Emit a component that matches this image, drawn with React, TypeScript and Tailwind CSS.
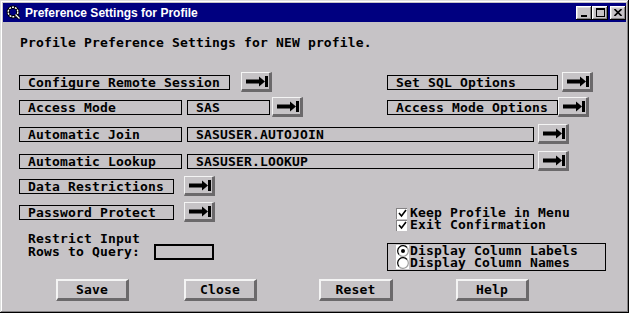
import React from 'react';

function ArrowBtn({ className = '' }: { className?: string }) {
  return (
    <button
      className={`flex h-[20px] w-[31px] shrink-0 items-center justify-start border-t border-l border-t-[#f4f4f4] border-l-[#f4f4f4] border-r-[3px] border-b-[3px] border-r-[#6b696b] border-b-[#6b696b] bg-[#c6c3c6] pl-[4px] ${className}`}
    >
      <svg width="22" height="11" viewBox="0 0 22 11">
        <rect x="0" y="3.5" width="14" height="4" fill="#000" />
        <polygon points="13,0.5 19,5.5 13,10.5" fill="#000" />
        <rect x="19" y="0" width="3" height="11" fill="#000" />
      </svg>
    </button>
  );
}

function Box({ className = '', children }: { className?: string; children?: React.ReactNode }) {
  return (
    <div className={`h-[15px] shrink-0 whitespace-pre border border-black pl-[8px] leading-[13px] ${className}`}>
      {children}
    </div>
  );
}

function PushBtn({ label, className = '' }: { label: string; className?: string }) {
  return (
    <button
      className={`flex h-[22px] shrink-0 items-center justify-center border-t-2 border-l-2 border-t-[#f4f4f4] border-l-[#f4f4f4] border-r-[3px] border-b-[3px] border-r-[#6b696b] border-b-[#6b696b] bg-[#c6c3c6] leading-[13px] ${className}`}
    >
      {label}
    </button>
  );
}

function Check({ label }: { label: string }) {
  return (
    <div className="flex h-[12px] items-center pl-[9px] leading-[12px]">
      <div className="flex h-[11px] w-[11px] items-center justify-center border-t border-l border-t-[#848284] border-l-[#848284] bg-white">
        <svg width="9" height="9" viewBox="0 0 9 9">
          <path d="M1 4 L3.5 7 L8 1" stroke="#000" strokeWidth="1.6" fill="none" />
        </svg>
      </div>
      <span className="ml-[3px] whitespace-pre">{label}</span>
    </div>
  );
}

function Radio({ label, on }: { label: string; on?: boolean }) {
  return (
    <div className="flex h-[12px] items-center leading-[12px]">
      <div className="flex h-[12px] w-[13px] items-center justify-center bg-white">
        <svg width="12" height="12" viewBox="0 0 12 12">
          <path d="M10 2.5 A5 5 0 0 0 2 9.5" stroke="#000" strokeWidth="1.2" fill="none" />
          <path d="M2 9.5 A5 5 0 0 0 10 2.5" stroke="#a0a0a0" strokeWidth="1.2" fill="none" />
          {on && <circle cx="6" cy="6" r="2" fill="#000" />}
        </svg>
      </div>
      <span className="ml-[1px] whitespace-pre">{label}</span>
    </div>
  );
}

export default function App() {
  const bevel =
    'shadow-[inset_-1px_-1px_#000,inset_1px_1px_#dedfde,inset_-2px_-2px_#848284,inset_2px_2px_#fff]';
  const tbtn =
    'flex h-[14px] w-[16px] items-center justify-center bg-[#c6c3c6] shadow-[inset_-1px_-1px_#000,inset_1px_1px_#fff,inset_-2px_-2px_#848284,inset_2px_2px_#dedfde]';

  return (
    <div className="flex h-[313px] w-[632px] bg-white">
      <div className={`flex h-[313px] w-[629px] flex-col bg-[#c6c3c6] p-[3px] ${bevel}`}>
        <div className="flex h-[19px] shrink-0 items-center bg-[#000080] pl-[3px]">
          <svg width="15" height="15" viewBox="0 0 15 15">
            <circle cx="7" cy="7" r="4.8" stroke="#000" strokeWidth="3.2" fill="none" />
            <circle cx="7" cy="7" r="4.8" stroke="#fff" strokeWidth="1.4" fill="none" strokeDasharray="2 1" />
            <path d="M9.5 9.5 L13.5 13.5" stroke="#000" strokeWidth="3" />
            <path d="M9.5 9.5 L13.5 13.5" stroke="#fff" strokeWidth="1.2" />
          </svg>
          <span className="ml-[4px] font-['Liberation_Sans',Arial,sans-serif] text-[12px] font-bold text-white">
            Preference Settings for Profile
          </span>
          <div className="ml-auto flex items-center">
            <div className={tbtn}>
              <div className="mt-[6px] h-[2px] w-[6px] bg-black" />
            </div>
            <div className={tbtn}>
              <div className="h-[9px] w-[9px] border border-t-2 border-black" />
            </div>
            <div className={`${tbtn} ml-[2px]`}>
              <svg width="8" height="7" viewBox="0 0 8 7">
                <path d="M0.5 0 L7.5 7 M7.5 0 L0.5 7" stroke="#000" strokeWidth="1.6" />
              </svg>
            </div>
          </div>
        </div>

        <div className="flex flex-col pl-[16px] font-['DejaVu_Sans_Mono',monospace] text-[13px] font-bold tracking-[0.17px] text-black">
          <div className="mt-[13px] h-[15px] whitespace-pre pl-[1px] leading-[15px]">
            Profile Preference Settings for NEW profile.
          </div>

          <div className="mt-[22px] flex h-[20px] items-center">
            <Box className="w-[211px]">Configure Remote Session</Box>
            <ArrowBtn className="ml-[11px]" />
            <Box className="ml-[115px] w-[171px]">Set SQL Options</Box>
            <ArrowBtn className="ml-[4px]" />
          </div>

          <div className="mt-[5px] flex h-[20px] items-center">
            <Box className="w-[163px]">Access Mode</Box>
            <Box className="ml-[5px] w-[83px]">SAS</Box>
            <ArrowBtn className="ml-[2px]" />
            <Box className="ml-[84px] w-[171px]">Access Mode Options</Box>
            <ArrowBtn />
          </div>

          <div className="mt-[7px] flex h-[20px] items-center">
            <Box className="w-[163px]">Automatic Join</Box>
            <Box className="ml-[5px] w-[347px]">SASUSER.AUTOJOIN</Box>
            <ArrowBtn className="ml-[4px]" />
          </div>

          <div className="mt-[7px] flex h-[20px] items-center">
            <Box className="w-[163px]">Automatic Lookup</Box>
            <Box className="ml-[5px] w-[347px]">SASUSER.LOOKUP</Box>
            <ArrowBtn className="ml-[4px]" />
          </div>

          <div className="mt-[5px] flex">
            <div className="flex w-[368px] shrink-0 flex-col">
              <div className="flex h-[20px] items-center">
                <Box className="w-[155px]">Data Restrictions</Box>
                <ArrowBtn className="ml-[10px]" />
              </div>
              <div className="mt-[6px] flex h-[20px] items-center">
                <Box className="w-[155px]">Password Protect</Box>
                <ArrowBtn className="ml-[10px]" />
              </div>
              <div className="mt-[10px] pl-[9px] leading-[13px]">
                <div className="h-[13px] whitespace-pre">Restrict Input</div>
                <div className="flex h-[13px] items-center">
                  <span className="w-[126px] shrink-0 whitespace-pre">Rows to Query:</span>
                  <div className="h-[16px] w-[60px] shrink-0 border-2 border-black" />
                </div>
              </div>
            </div>

            <div className="flex flex-col pt-[31px]">
              <Check label="Keep Profile in Menu" />
              <Check label="Exit Confirmation" />
              <div className="mt-[12px] h-[28px] w-[219px] border border-black pl-[8px] pt-[1px]">
                <Radio label="Display Column Labels" on />
                <Radio label="Display Column Names" />
              </div>
            </div>
          </div>

          <div className="mt-[8px] flex">
            <PushBtn label="Save" className="ml-[37px] w-[73px]" />
            <PushBtn label="Close" className="ml-[55px] w-[73px]" />
            <PushBtn label="Reset" className="ml-[62px] w-[74px]" />
            <PushBtn label="Help" className="ml-[63px] w-[73px]" />
          </div>
        </div>
      </div>
    </div>
  );
}
